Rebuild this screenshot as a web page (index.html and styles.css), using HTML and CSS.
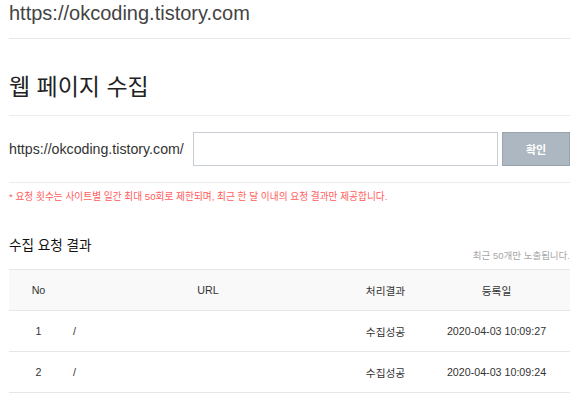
FILE: index.html
```html
<!DOCTYPE html>
<html lang="ko">
<head>
<meta charset="utf-8">
<title>웹 페이지 수집</title>
<link rel="stylesheet" href="styles.css">
</head>
<body>
<div class="wrap">
  <div class="site">https://okcoding.tistory.com</div>
  <h1 class="page-title">웹 페이지 수집</h1>
  <form class="form-row" onsubmit="return false">
    <label class="prefix" for="path">https://okcoding.tistory.com/</label>
    <input class="path-input" id="path" type="text">
    <button class="submit" type="submit">확인</button>
  </form>
  <p class="notice">* 요청 횟수는 사이트별 일간 최대 50회로 제한되며, 최근 한 달 이내의 요청 결과만 제공합니다.</p>
  <div class="results-head">
    <h2 class="results-title">수집 요청 결과</h2>
    <span class="results-meta">최근 50개만 노출됩니다.</span>
  </div>
  <table class="results">
    <colgroup>
      <col class="c-no"><col class="c-url"><col class="c-state"><col class="c-date">
    </colgroup>
    <thead>
      <tr><th>No</th><th>URL</th><th>처리결과</th><th>등록일</th></tr>
    </thead>
    <tbody>
      <tr><td class="num">1</td><td class="url">/</td><td class="state">수집성공</td><td class="date">2020-04-03 10:09:27</td></tr>
      <tr><td class="num">2</td><td class="url">/</td><td class="state">수집성공</td><td class="date">2020-04-03 10:09:24</td></tr>
    </tbody>
  </table>
</div>
</body>
</html>
```
FILE: styles.css
```css
* { box-sizing: border-box; }
html, body { margin: 0; padding: 0; background: #fff; }
body {
  font-family: "Liberation Sans", "Noto Sans CJK KR", Arial, sans-serif;
  color: #333;
}
.wrap {
  width: 579px;
  padding: 0 9px;
}
.site {
  height: 39px;
  font-size: 20px;
  line-height: 26px;
  color: #444;
  border-bottom: 1px solid #e6e6e6;
}
.page-title {
  margin: 0;
  padding: 33px 0 13px;
  font-size: 23px;
  line-height: 30px;
  font-weight: 400;
  color: #222;
  border-bottom: 1px solid #ececec;
}
.form-row {
  display: flex;
  align-items: center;
  margin: 0;
  padding: 16px 0;
  border-bottom: 1px solid #ececec;
}
.prefix {
  font-size: 14.2px;
  color: #333;
  margin-right: 9px;
  white-space: nowrap;
}
.path-input {
  flex: 1;
  height: 34px;
  border: 1px solid #c9ced4;
  margin: 0;
  padding: 0 8px;
  outline: none;
  background: #fff;
}
.submit {
  width: 68px;
  height: 34px;
  margin: 0 0 0 4px;
  background: #adb7c1;
  border: 1px solid #9aa4ae;
  color: #fff;
  font-family: inherit;
  font-size: 11px;
  font-weight: 700;
  cursor: pointer;
}
.notice {
  margin: 0;
  padding-top: 7px;
  font-size: 9.7px;
  line-height: 14px;
  color: #ff5b5b;
}
.results-head {
  display: flex;
  justify-content: space-between;
  align-items: flex-end;
  padding-top: 33px;
  margin-bottom: 6px;
}
.results-title {
  margin: 0 0 8px;
  font-size: 13.6px;
  line-height: 18px;
  font-weight: 400;
  color: #111;
}
.results-meta {
  font-size: 9.5px;
  line-height: 14px;
  color: #a6a6a6;
}
.results {
  width: 561px;
  border-collapse: collapse;
  table-layout: fixed;
  font-size: 10.7px;
  color: #333;
}
.c-no { width: 59px; }
.c-url { width: 280px; }
.c-state { width: 75px; }
.c-date { width: 147px; }
.results th {
  height: 41px;
  padding: 0;
  font-weight: 400;
  background: #f9f9f9;
  border-top: 1px solid #e6e6e6;
  border-bottom: 1px solid #e6e6e6;
  text-align: center;
  color: #333;
}
.results td {
  height: 41px;
  padding: 0;
  border-bottom: 1px solid #e6e6e6;
  text-align: center;
}
.results td.url {
  text-align: left;
  padding-left: 5px;
}
```
